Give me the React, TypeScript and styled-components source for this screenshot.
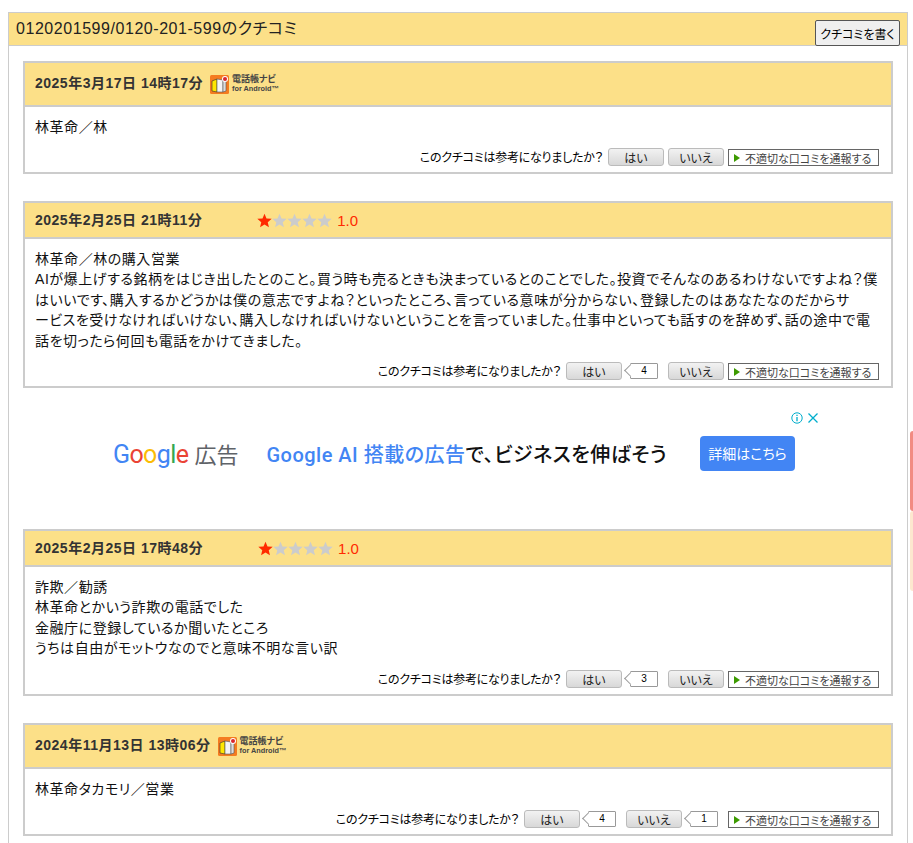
import React from "react";
import styled, { createGlobalStyle } from "styled-components";

const Global = createGlobalStyle`
  html, body { margin: 0; padding: 0; background: #fff; }
  body {
    height: 843px;
    overflow: hidden;
    font-family: "Liberation Sans", "Noto Sans CJK JP", sans-serif;
    font-feature-settings: "palt";
    color: #000;
  }
`;

const Section = styled.section`
  position: relative;
  width: 900px;
  margin: 12px 0 0 8px;
  box-sizing: border-box;
  border: 1px solid #ccc;
  border-bottom: none;
  padding-bottom: 20px;
`;

const Title = styled.div`
  height: 32px;
  background: #fce088;
  border-bottom: 1px solid #ccc;
  display: flex;
  justify-content: space-between;
  align-items: flex-end;
  padding: 0 7px 0 7px;
  > h2 {
    margin: 0 0 6px;
    font-size: 16px;
    line-height: 20px;
    font-weight: normal;
    letter-spacing: 0.55px;
    color: #222;
  }
`;

const WriteButton = styled.button`
  width: 85px;
  height: 26px;
  box-sizing: border-box;
  padding: 0;
  margin-bottom: -1px;
  background: #efefef;
  border: 1px solid #555;
  border-radius: 2px;
  font-family: inherit;
  font-feature-settings: inherit;
  font-size: 12px;
  white-space: nowrap;
  color: #000;
`;

const Reviews = styled.div`
  display: flex;
  flex-direction: column;
  padding: 15px 14px 0;
`;

const Card = styled.article<{ $after?: number }>`
  width: 870px;
  box-sizing: border-box;
  border: 2px solid #ccc;
  margin-bottom: ${(p) => p.$after ?? 27}px;
`;

const CardHead = styled.header<{ $h: number }>`
  height: ${(p) => p.$h}px;
  background: #fce088;
  border-bottom: 2px solid #ccc;
  display: flex;
  align-items: center;
  padding-left: 10px;
  > b {
    margin-bottom: ${(p) => (p.$h > 40 ? 4 : 2)}px;
    font-size: 14px;
    letter-spacing: 0.5px;
    color: #333;
    white-space: pre;
  }
`;

const Rating = styled.div`
  display: flex;
  align-items: center;
  margin-left: 55px;
  > span {
    margin-left: 5px;
    font-size: 15px;
    color: #ff2a00;
  }
`;

const Nav = styled.div`
  display: flex;
  align-items: center;
  margin-left: 7px;
  > div {
    display: flex;
    flex-direction: column;
    margin-left: 3px;
    font-size: 9px;
    line-height: 9px;
    color: #444;
    font-weight: bold;
    > em { font-style: normal; font-size: 7.3px; }
  }
`;

const Body = styled.div`
  padding: 10px 0 0 10px;
  font-size: 14px;
  line-height: 20.4px;
  letter-spacing: 0.55px;
  color: #111;
  > p { margin: 0; white-space: nowrap; }
`;

const Votes = styled.div<{ $pad: number }>`
  display: flex;
  justify-content: flex-end;
  align-items: center;
  height: 18px;
  padding: ${(p) => p.$pad}px 12px 6px 0;
  font-size: 12px;
  > span { margin: 0 5px 2px 0; letter-spacing: -0.24px; }
`;

const VoteButton = styled.button`
  width: 56px;
  height: 18px;
  padding: 0 0 2px;
  margin-right: 4px;
  box-sizing: border-box;
  border: 1px solid #bbb;
  border-radius: 3px;
  background: linear-gradient(#f2f2f2, #d8d8d8);
  font-family: inherit;
  font-feature-settings: inherit;
  font-size: 12px;
  color: #222;
`;

const Count = styled.i`
  position: relative;
  width: 28px;
  height: 16px;
  margin: 0 10px 0 4px;
  box-sizing: border-box;
  border: 1px solid #999;
  border-radius: 1px;
  background: #fff;
  font-style: normal;
  font-size: 10px;
  line-height: 14px;
  text-align: center;
  &::before {
    content: "";
    position: absolute;
    left: -5px;
    top: 2px;
    width: 8px;
    height: 8px;
    background: #fff;
    border-left: 1px solid #999;
    border-bottom: 1px solid #999;
    transform: rotate(45deg);
  }
`;

const Report = styled.a`
  display: flex;
  align-items: center;
  width: 151px;
  height: 17px;
  margin: 1px 0 0;
  box-sizing: border-box;
  border: 1px solid #666;
  background: #fff;
  padding-left: 5px;
  font-size: 11px;
  color: #444;
  white-space: nowrap;
  &::before {
    content: "";
    border-left: 6px solid #3c9a00;
    border-top: 4px solid transparent;
    border-bottom: 4px solid transparent;
    margin-right: 5px;
  }
`;

const Ad = styled.aside`
  position: relative;
  height: 141px;
  box-sizing: border-box;
  white-space: nowrap;
`;

const AdRow = styled.div`
  display: flex;
  align-items: center;
  padding-top: 47px;
  height: 36px;
`;

const GoogleMark = styled.div`
  margin-left: 90px;
  font-family: "Roboto", sans-serif;
  font-size: 25px;
  letter-spacing: -0.6px;
  > small {
    margin-left: 6px;
    font-size: 22px;
    letter-spacing: 0;
    color: #5f6368;
    font-family: "Noto Sans CJK JP", sans-serif;
  }
`;

const Letter = styled.span<{ $c: string }>`
  color: ${(p) => p.$c};
`;

const Headline = styled.div`
  margin-left: 28px;
  font-family: "Roboto", "Noto Sans CJK JP", sans-serif;
  font-size: 20px;
  font-weight: 500;
  letter-spacing: 0.5px;
  color: #111;
  > span { color: #4285f4; }
`;

const AdButton = styled.div`
  margin-left: 33px;
  width: 95px;
  height: 35px;
  border-radius: 4px;
  background: #4285f4;
  color: #fff;
  font-family: "Noto Sans CJK JP", sans-serif;
  font-size: 14px;
  line-height: 35px;
  text-align: center;
`;

const AdIcons = styled.div`
  position: absolute;
  top: 23px;
  left: 767px;
  display: flex;
  gap: 3px;
`;

const ScrollMark = styled.div<{ $top: number; $c: string }>`
  position: fixed;
  right: 0;
  top: ${(p) => p.$top}px;
  width: 3px;
  height: 80px;
  background: ${(p) => p.$c};
  border-radius: 3px 0 0 3px;
`;

const Star = ({ on }: { on?: boolean }) => (
  <svg width="15" height="15" viewBox="0 0 24 24" style={{ display: "block" }}>
    <path
      d="M12 1l3.2 7.6 8.3.7-6.3 5.4 1.9 8.1L12 18.5 4.900 22.800l1.900-8.100L.5 9.300l8.300-.7z"
      fill={on ? "#ff2a00" : "#ccc"}
    />
  </svg>
);

const NavIcon = () => (
  <svg width="19" height="19" viewBox="0 0 19 19">
    <rect width="19" height="19" rx="1.500" fill="#f47b20" />
    <path d="M2 6l5-2v13l-5-1z" fill="#ffe600" stroke="#333" strokeWidth=".6" />
    <path d="M7 4l6 1v12l-6 0z" fill="#f4f4f4" stroke="#555" strokeWidth=".6" />
    <path d="M13 5l3-1v12l-3 1z" fill="#ddd" stroke="#555" strokeWidth=".6" />
    <circle cx="15" cy="4" r="3" fill="#fff" />
    <circle cx="15" cy="4" r="2" fill="#d9262c" />
  </svg>
);

type Review = {
  date: string;
  nav?: boolean;
  text: string[];
  pad: number;
  yes?: number;
  no?: number;
  head: number;
};

const reviews: Review[] = [
  { date: "2025年3月17日 14時17分", nav: true, text: ["林革命／林"], pad: 10.6, head: 42 },
  {
    date: "2025年2月25日 21時11分",
    text: [
      "林革命／林の購入営業",
      "AIが爆上げする銘柄をはじき出したとのこと。買う時も売るときも決まっているとのことでした。投資でそんなのあるわけないですよね？僕",
      "はいいです、購入するかどうかは僕の意志ですよね？といったところ、言っている意味が分からない、登録したのはあなたなのだからサ",
      "ービスを受けなければいけない、購入しなければいけないということを言っていました。仕事中といっても話すのを辞めず、話の途中で電",
      "話を切ったら何回も電話をかけてきました。",
    ],
    pad: 11,
    yes: 4,
    head: 34,
  },
  {
    date: "2025年2月25日 17時48分",
    text: [
      "詐欺／勧誘",
      "林革命とかいう詐欺の電話でした",
      "金融庁に登録しているか聞いたところ",
      "うちは自由がモットウなのでと意味不明な言い訳",
    ],
    pad: 11.4,
    yes: 3,
    head: 34,
  },
  {
    date: "2024年11月13日 13時06分",
    nav: true,
    text: ["林革命タカモリ／営業"],
    pad: 10.6,
    yes: 4,
    no: 1,
    head: 42,
  },
];

const ReviewCard = ({ r, after }: { r: Review; after?: number }) => (
  <Card $after={after}>
    <CardHead $h={r.head}>
      <b>{r.date}</b>
      {r.nav ? (
        <Nav>
          <NavIcon />
          <div>
            <span>電話帳ナビ</span>
            <em>for Android™</em>
          </div>
        </Nav>
      ) : (
        <Rating>
          <Star on />
          <Star />
          <Star />
          <Star />
          <Star />
          <span>1.0</span>
        </Rating>
      )}
    </CardHead>
    <Body>
      {r.text.map((t) => (
        <p key={t}>{t}</p>
      ))}
    </Body>
    <Votes $pad={r.pad}>
      <span>このクチコミは参考になりましたか？</span>
      <VoteButton>はい</VoteButton>
      {r.yes !== undefined && <Count>{r.yes}</Count>}
      <VoteButton>いいえ</VoteButton>
      {r.no !== undefined && <Count>{r.no}</Count>}
      <Report>不適切な口コミを通報する</Report>
    </Votes>
  </Card>
);

export default function App() {
  return (
    <>
      <Global />
      <Section>
        <Title>
          <h2>0120201599/0120-201-599のクチコミ</h2>
          <WriteButton>クチコミを書く</WriteButton>
        </Title>
        <Reviews>
          <ReviewCard r={reviews[0]} />
          <ReviewCard r={reviews[1]} after={0} />
          <Ad>
            <AdRow>
              <GoogleMark>
                <Letter $c="#4285f4">G</Letter>
                <Letter $c="#ea4335">o</Letter>
                <Letter $c="#fbbc05">o</Letter>
                <Letter $c="#4285f4">g</Letter>
                <Letter $c="#34a853">l</Letter>
                <Letter $c="#ea4335">e</Letter>
                <small>広告</small>
              </GoogleMark>
              <Headline>
                <span>Google AI 搭載の広告</span>で、ビジネスを伸ばそう
              </Headline>
              <AdButton>詳細はこちら</AdButton>
            </AdRow>
            <AdIcons>
              <svg width="14" height="14" viewBox="0 0 14 14">
                <circle cx="7" cy="7" r="5.200" fill="none" stroke="#00aecd" />
                <path d="M7 3.800v1.200M7 6v4.200" stroke="#00aecd" strokeWidth="1.300" />
              </svg>
              <svg width="12" height="14" viewBox="0 0 12 14">
                <path d="M1.500 2.500l9 9M10.500 2.500l-9 9" stroke="#00aecd" strokeWidth="1.300" />
              </svg>
            </AdIcons>
          </Ad>
          <ReviewCard r={reviews[2]} />
          <ReviewCard r={reviews[3]} />
        </Reviews>
      </Section>
      <ScrollMark $top={431} $c="#f28b82" />
      <ScrollMark $top={511} $c="#fde8cf" />
    </>
  );
}
